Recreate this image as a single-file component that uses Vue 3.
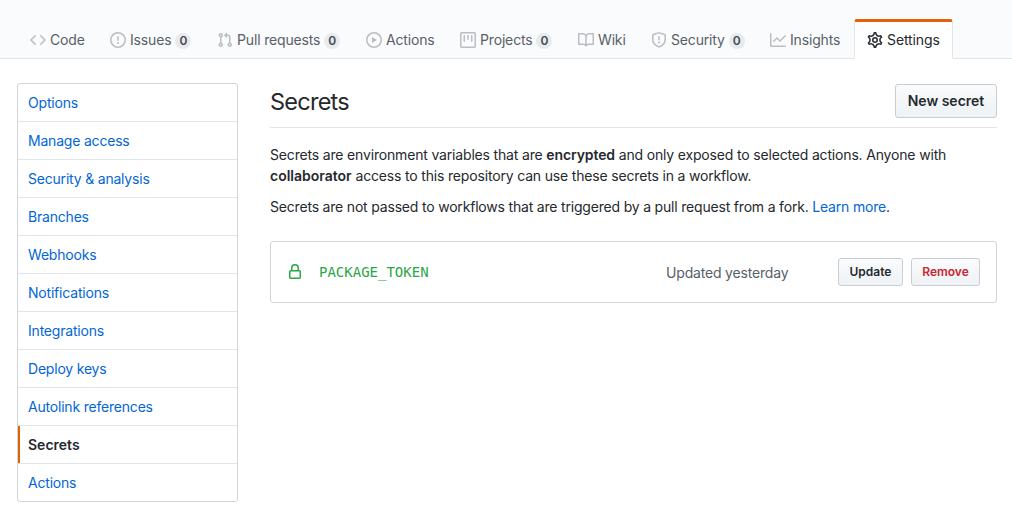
<script setup>
const tabs = [
  { label: 'Code', icon: 'code', width: 80 },
  { label: 'Issues', icon: 'issue', width: 107, count: 0 },
  { label: 'Pull requests', icon: 'pull', width: 149, count: 0 },
  { label: 'Actions', icon: 'play', width: 94 },
  { label: 'Projects', icon: 'project', width: 118, count: 0 },
  { label: 'Wiki', icon: 'book', width: 73 },
  { label: 'Security', icon: 'shield', width: 119, count: 0 },
  { label: 'Insights', icon: 'graph', width: 97 },
  { label: 'Settings', icon: 'gear', width: 99, selected: true }
]

const icons = {
  code: 'M4.72 3.22a.75.75 0 011.06 1.06L2.06 8l3.72 3.72a.75.75 0 11-1.06 1.06L.47 8.53a.75.75 0 010-1.06l4.25-4.25zm6.56 0a.75.75 0 10-1.06 1.06L13.94 8l-3.72 3.72a.75.75 0 101.06 1.06l4.25-4.25a.75.75 0 000-1.06l-4.25-4.25z',
  issue: 'M8 1.5a6.5 6.5 0 100 13 6.5 6.5 0 000-13zM0 8a8 8 0 1116 0A8 8 0 010 8zm9 3a1 1 0 11-2 0 1 1 0 012 0zm-.25-6.25a.75.75 0 00-1.5 0v3.5a.75.75 0 001.5 0v-3.5z',
  pull: 'M7.177 3.073L9.573.677A.25.25 0 0110 .854v4.792a.25.25 0 01-.427.177L7.177 3.427a.25.25 0 010-.354zM3.75 2.5a.75.75 0 100 1.5.75.75 0 000-1.5zm-2.25.75a2.25 2.25 0 113 2.122v5.256a2.251 2.251 0 11-1.5 0V5.372A2.25 2.25 0 011.5 3.25zM11 2.5h-1V4h1a1 1 0 011 1v5.628a2.251 2.251 0 101.5 0V5A2.5 2.5 0 0011 2.5zm1 10.25a.75.75 0 111.5 0 .75.75 0 01-1.5 0zM3.75 12a.75.75 0 100 1.5.75.75 0 000-1.5z',
  play: 'M1.5 8a6.5 6.5 0 1113 0 6.5 6.5 0 01-13 0zM8 0a8 8 0 100 16A8 8 0 008 0zM6.379 5.227A.25.25 0 006 5.442v5.117a.25.25 0 00.379.214l4.264-2.559a.25.25 0 000-.428L6.379 5.227z',
  project: 'M1.75 0A1.75 1.75 0 000 1.75v12.5C0 15.216.784 16 1.75 16h12.5A1.75 1.75 0 0016 14.25V1.75A1.75 1.75 0 0014.25 0H1.75zM1.5 1.75a.25.25 0 01.25-.25h12.5a.25.25 0 01.25.25v12.5a.25.25 0 01-.25.25H1.75a.25.25 0 01-.25-.25V1.75zM11.75 3a.75.75 0 00-.75.75v5.5a.75.75 0 001.5 0v-5.5a.75.75 0 00-.75-.75zm-8.25.75a.75.75 0 011.5 0v5.5a.75.75 0 01-1.5 0v-5.5zM8 3a.75.75 0 00-.75.75v3.5a.75.75 0 001.5 0v-3.5A.75.75 0 008 3z',
  book: 'M0 1.75A.75.75 0 01.75 1h4.253c1.227 0 2.317.59 3 1.501A3.744 3.744 0 0111.006 1h4.245a.75.75 0 01.75.75v10.5a.75.75 0 01-.75.75h-4.507a2.25 2.25 0 00-1.591.659l-.622.621a.75.75 0 01-1.06 0l-.622-.621A2.25 2.25 0 005.258 13H.75a.75.75 0 01-.75-.75V1.75zm8.755 3a2.25 2.25 0 012.25-2.25H14.5v9h-3.757c-.71 0-1.4.201-1.992.572l.004-7.322zm-1.504 7.324l.004-5.073-.002-2.253A2.25 2.25 0 005.003 2.5H1.5v9h3.757a3.75 3.75 0 011.994.574z',
  shield: 'M7.467.133a1.75 1.75 0 011.066 0l5.25 1.68A1.75 1.75 0 0115 3.48V7c0 1.566-.32 3.182-1.303 4.682-.983 1.498-2.585 2.813-5.032 3.855a1.7 1.7 0 01-1.33 0c-2.447-1.042-4.049-2.357-5.032-3.855C1.32 10.182 1 8.566 1 7V3.48a1.75 1.75 0 011.217-1.667l5.25-1.68zm.61 1.429a.25.25 0 00-.153 0l-5.25 1.68a.25.25 0 00-.174.238V7c0 1.358.275 2.666 1.057 3.86.784 1.194 2.121 2.34 4.366 3.297a.2.2 0 00.154 0c2.245-.956 3.582-2.104 4.366-3.298C13.225 9.666 13.5 8.36 13.5 7V3.48a.25.25 0 00-.174-.237l-5.25-1.68zM9 10.5a1 1 0 11-2 0 1 1 0 012 0zm-.25-5.75a.75.75 0 10-1.5 0v3a.75.75 0 001.5 0v-3z',
  graph: 'M1.5 1.75a.75.75 0 00-1.5 0v12.5c0 .414.336.75.75.75h14.5a.75.75 0 000-1.5H1.5V1.75zm14.28 2.53a.75.75 0 00-1.06-1.06L10 7.94 7.53 5.47a.75.75 0 00-1.06 0L3.22 8.72a.75.75 0 001.06 1.06L7 7.06l2.47 2.47a.75.75 0 001.06 0l5.25-5.25z',
  gear: 'M7.429 1.525a6.593 6.593 0 011.142 0c.036.003.108.036.137.146l.289 1.105c.147.56.55.967.997 1.189.174.086.341.183.501.29.417.278.97.423 1.53.27l1.102-.303c.11-.03.175.016.195.046.219.31.41.641.573.989.014.031.022.11-.059.19l-.815.806c-.411.406-.562.957-.53 1.456a4.588 4.588 0 010 .582c-.032.499.119 1.05.53 1.456l.815.806c.08.08.073.159.059.19a6.494 6.494 0 01-.573.99c-.02.029-.086.074-.195.045l-1.103-.303c-.559-.153-1.112-.008-1.529.27-.16.107-.327.204-.5.29-.449.222-.851.628-.998 1.189l-.289 1.105c-.029.11-.101.143-.137.146a6.613 6.613 0 01-1.142 0c-.036-.003-.108-.037-.137-.146l-.289-1.105c-.147-.56-.55-.967-.997-1.189a4.502 4.502 0 01-.501-.29c-.417-.278-.97-.423-1.53-.27l-1.102.303c-.11.03-.175-.016-.195-.046a6.492 6.492 0 01-.573-.989c-.014-.031-.022-.11.059-.19l.815-.806c.411-.406.562-.957.53-1.456a4.587 4.587 0 010-.582c.032-.499-.119-1.05-.53-1.456l-.815-.806c-.08-.08-.073-.159-.059-.19a6.44 6.44 0 01.573-.99c.02-.029.086-.075.195-.045l1.103.303c.559.153 1.112.008 1.529-.27.16-.107.327-.204.5-.29.449-.222.851-.628.998-1.189l.289-1.105c.029-.11.101-.143.137-.146z',
  lock: 'M4 4v2h-.25A1.75 1.75 0 002 7.75v5.5c0 .966.784 1.75 1.75 1.75h8.5A1.75 1.75 0 0014 13.25v-5.5A1.75 1.75 0 0012.25 6H12V4a4 4 0 10-8 0zm6.5 2V4a2.5 2.5 0 10-5 0v2h5zM12 7.5h.25a.25.25 0 01.25.25v5.5a.25.25 0 01-.25.25h-8.5a.25.25 0 01-.25-.25v-5.5a.25.25 0 01.25-.25H12z'
}

const menu = [
  'Options', 'Manage access', 'Security & analysis', 'Branches', 'Webhooks', 'Notifications',
  'Integrations', 'Deploy keys', 'Autolink references', 'Secrets', 'Actions'
]
</script>

<template>
  <div class="page">
    <nav class="tabs">
      <a
        v-for="tab in tabs"
        :key="tab.label"
        class="tab"
        :class="{ selected: tab.selected }"
        :style="{ width: tab.width + 'px' }"
      >
        <svg class="icon" viewBox="0 0 16 16" width="16" height="16">
          <g v-if="tab.icon === 'gear'" fill="none" stroke="currentColor">
            <path :d="icons.gear" stroke-width="1.35" transform="translate(8 8) scale(1.11) translate(-8 -8)" />
            <circle cx="8" cy="8" r="2.25" stroke-width="1.5" />
          </g>
          <path v-else :d="icons[tab.icon]" fill="currentColor" fill-rule="evenodd" />
        </svg>
        <span class="label">{{ tab.label }}</span>
        <span v-if="tab.count !== undefined" class="counter">{{ tab.count }}</span>
      </a>
    </nav>

    <div class="body">
      <aside class="menu">
        <a v-for="item in menu" :key="item" class="menu-item" :class="{ current: item === 'Secrets' }">{{ item }}</a>
      </aside>

      <main class="content">
        <header class="subhead">
          <h2>Secrets</h2>
          <button class="btn">New secret</button>
        </header>
        <p>
          <span class="line">Secrets are environment variables that are <strong>encrypted</strong> and only exposed to selected actions. Anyone with</span>
          <span class="line">
            <strong class="wide">collaborator</strong> access to this repository can use these secrets in a workflow.
          </span>
        </p>
        <p>
          <span class="line last">Secrets are not passed to workflows that are triggered by a pull request from a fork. <a class="link">Learn more</a>.</span>
        </p>
        <section class="secret">
          <svg class="lock" viewBox="0 0 16 16" width="16" height="16">
            <path :d="icons.lock" fill="currentColor" fill-rule="evenodd" />
          </svg>
          <code>PACKAGE_TOKEN</code>
          <span class="updated">Updated yesterday</span>
          <button class="btn small">Update</button>
          <button class="btn small danger">Remove</button>
        </section>
      </main>
    </div>
  </div>
</template>

<style>
body {
  background: #fff;
}
</style>

<style scoped>
.page {
  box-sizing: border-box;
  width: 1012px;
  height: 525px;
  overflow: hidden;
  font: 14px/21px Inter, "Liberation Sans", sans-serif;
  color: #24292e;
}
.page * {
  box-sizing: border-box;
}
.tabs {
  display: flex;
  align-items: flex-end;
  height: 59px;
  padding-left: 17px;
  background: #fafbfc;
  border-bottom: 1px solid #e1e4e8;
}
.tab {
  display: flex;
  flex: none;
  align-items: center;
  height: 40px;
  margin-bottom: -1px;
  padding: 0 0 0 12px;
  border: 1px solid transparent;
  border-top-width: 3px;
  color: #586069;
  white-space: nowrap;
  letter-spacing: -0.16px;
}
.tab.selected {
  background: #fff;
  border-color: #e36209 #e1e4e8 transparent;
  border-radius: 3px 3px 0 0;
  color: #24292e;
  letter-spacing: -0.1px;
}
.icon {
  flex: none;
  margin-right: 4px;
  color: #babdc1;
}
.label {
  padding-bottom: 2px;
}
.selected .icon {
  color: #24292e;
}
.counter {
  display: flex;
  align-items: center;
  justify-content: center;
  width: 16px;
  height: 16px;
  margin: 1px 0 0 4px;
  border-radius: 8px;
  background: #e8eaec;
  color: #444d56;
  font-size: 12px;
  font-weight: 600;
  letter-spacing: 0;
}
.body {
  display: flex;
  align-items: flex-start;
  gap: 32px;
  padding: 24px 15px 0 17px;
}
.menu {
  flex: none;
  width: 221px;
  border: 1px solid #d1d5da;
  border-radius: 3px;
  overflow: hidden;
}
.menu-item {
  display: block;
  height: 38px;
  padding: 8px 10px;
  border-bottom: 1px solid #e1e4e8;
  color: #0366d6;
  letter-spacing: -0.2px;
}
.menu-item:last-child {
  height: 37px;
  border-bottom: 0;
}
.menu-item.current {
  box-shadow: inset 2px 0 0 #e36209;
  color: #24292e;
  font-weight: 600;
  letter-spacing: 0;
}
.content {
  flex: 1;
}
.subhead {
  display: flex;
  justify-content: space-between;
  height: 45px;
  margin-bottom: 16px;
  padding-top: 1px;
  border-bottom: 1px solid #e1e4e8;
}
h2 {
  margin: 0;
  font-size: 23.5px;
  line-height: 36px;
  font-weight: 400;
  letter-spacing: -0.75px;
}
.btn {
  width: 102px;
  height: 34px;
  padding: 0;
  border: 1px solid #c9ccd0;
  border-radius: 3px;
  background: linear-gradient(#fafbfc, #eff3f6 90%);
  color: #24292e;
  font: 600 14px/20px Inter, "Liberation Sans", sans-serif;
}
p {
  margin: 0 0 10px;
}
.line {
  display: block;
  white-space: nowrap;
  letter-spacing: -0.17px;
}
.last {
  letter-spacing: -0.19px;
}
strong {
  font-weight: 600;
  letter-spacing: -0.1px;
}
.wide {
  letter-spacing: 0;
}
.link {
  color: #0366d6;
}
.secret {
  display: flex;
  align-items: center;
  height: 62px;
  margin-top: 24px;
  padding: 0 16px;
  border: 1px solid #d1d5da;
  border-radius: 3px;
}
.lock {
  flex: none;
  color: #28a745;
}
code {
  width: 347px;
  margin-left: 16px;
  color: #28a745;
  font: 14px/21px "DejaVu Sans Mono", monospace;
}
.updated {
  width: 172px;
  color: #586069;
  white-space: nowrap;
  letter-spacing: -0.18px;
}
.small {
  flex: none;
  width: 65px;
  height: 28px;
  font-size: 12px;
}
.danger {
  width: 69px;
  margin-left: 8px;
  color: #cb2431;
}
</style>
